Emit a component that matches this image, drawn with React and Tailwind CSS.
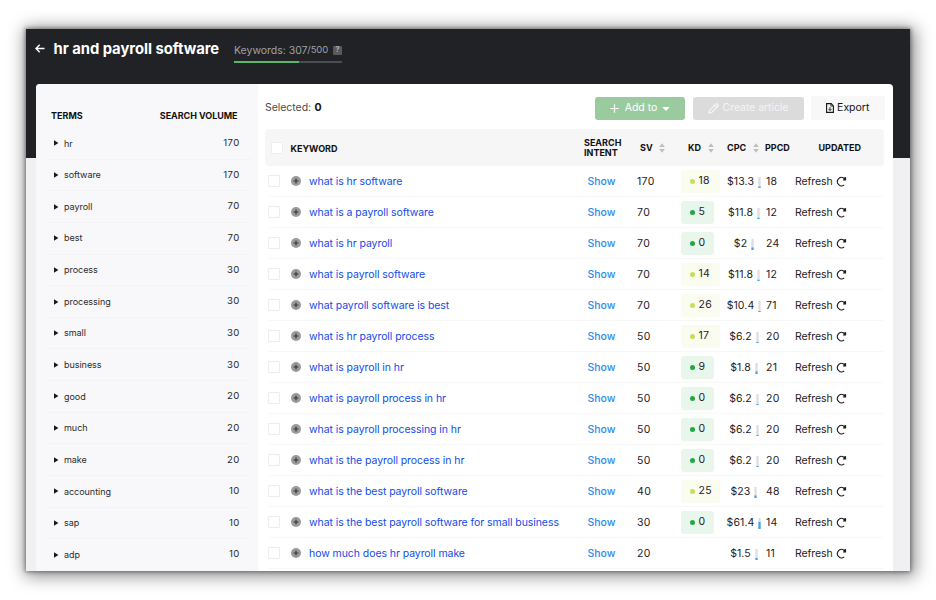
import React from "react";

const terms = [
  ["hr", 170], ["software", 170], ["payroll", 70], ["best", 70], ["process", 30],
  ["processing", 30], ["small", 30], ["business", 30], ["good", 20], ["much", 20],
  ["make", 20], ["accounting", 10], ["sap", 10], ["adp", 10],
];

// keyword, search volume, difficulty, cpc, ppc difficulty, gauge fill in px
const keywords = [
  ["what is hr software", 170, 18, "$13.3", 18, 1.5],
  ["what is a payroll software", 70, 5, "$11.8", 12, 1.2],
  ["what is hr payroll", 70, 0, "$2", 24, 2.5],
  ["what is payroll software", 70, 14, "$11.8", 12, 1.2],
  ["what payroll software is best", 70, 26, "$10.4", 71, 1],
  ["what is hr payroll process", 50, 17, "$6.2", 20, 1],
  ["what is payroll in hr", 50, 9, "$1.8", 21, 2.5],
  ["what is payroll process in hr", 50, 0, "$6.2", 20, 1],
  ["what is payroll processing in hr", 50, 0, "$6.2", 20, 1],
  ["what is the payroll process in hr", 50, 0, "$6.2", 20, 1],
  ["what is the best payroll software", 40, 25, "$23", 48, 2.5],
  ["what is the best payroll software for small business", 30, 0, "$61.4", 14, 7],
  ["how much does hr payroll make", 20, null, "$1.5", 11, 2],
];

function Sort() {
  return (
    <svg width="6" height="10" viewBox="0 0 6 10" fill="#bebebe" className="shrink-0">
      <path d="M3 0.3 5.8 4H0.2Z" />
      <path d="M3 9.7 5.8 6H0.2Z" />
    </svg>
  );
}

function Difficulty({ value }) {
  if (value === null) return null;
  const low = value < 10;
  return (
    <div className={`flex h-[23px] items-center gap-[3.5px] rounded-[3px] pl-[9px] ${low ? "w-[32.5px] bg-[#e8f6ec]" : "w-[38.5px] bg-[#f9fcef]"}`}>
      <span className={`size-[5px] rounded-full ${low ? "bg-[#22a745]" : "bg-[#c3df5c]"}`} />
      <span>{value}</span>
    </div>
  );
}

function Gauge({ fill }) {
  return (
    <svg width="3" height="11" viewBox="0 0 3 11" className="shrink-0">
      <rect x="0.4" width="2.2" height="11" fill="#dcdde0" />
      <rect x="0.4" y={11 - fill} width="2.2" height={fill} fill="#3fa5ee" />
    </svg>
  );
}

function RefreshIcon() {
  return (
    <svg width="11" height="11" viewBox="0 0 11 11" fill="none" className="shrink-0">
      <path d="M8.2 8.9A4.2 4.2 0 1 1 7.6 1.9" stroke="#1c1c1c" strokeWidth="1.1" />
      <path d="M10.1 1.1V4.4H6.8L7.6 3.2 7 1.7Z" fill="#1c1c1c" />
    </svg>
  );
}

function Box() {
  return <span className="size-[12px] shrink-0 rounded-[1px] border border-[#ededee] bg-white" />;
}

export default function App() {
  return (
    <div className="h-[600px] w-[936px] overflow-hidden bg-white pl-[26px] pt-[29px] font-['Inter','Liberation_Sans',sans-serif] text-[#1f2123]">
      <div className="h-[542px] w-[884px] bg-[linear-gradient(#202226_129px,#f0f0f2_129px)] shadow-[0_0_4px_1px_rgba(0,0,0,0.4),2px_2px_16px_3px_rgba(0,0,0,0.45)]">
        <header className="flex h-[55px] pl-[9px]">
          <svg width="10" height="9" viewBox="0 0 10 9" fill="none" stroke="#fff" strokeWidth="1.4" className="mt-[15px]">
            <path d="M9.5 4.5H1M4.7 0.7 0.9 4.5 4.7 8.3" />
          </svg>
          <h1 className="ml-[8.5px] mt-[10px] w-[180.5px] whitespace-nowrap text-[14.8px] font-bold leading-[20px] tracking-[-0.03px] text-white">hr and payroll software</h1>
          <div className="mt-[15px] w-[108px]">
            <div className="flex h-[13px] items-center whitespace-nowrap text-[#a0a1a4]">
              <span className="text-[10.5px] tracking-[-0.02px]">Keywords:</span>
              <span className="ml-[3px] text-[10.5px] tracking-[-0.1px]">307</span>
              <span className="text-[9.5px] tracking-[-0.1px]">/500</span>
              <span className="ml-auto flex h-[9px] w-[9px] items-center justify-center rounded-[1px] bg-[#58595c] text-[7px] font-bold text-[#b5b5b7]">?</span>
            </div>
            <div className="mt-[4px] h-[2px] bg-[#4b4d50]">
              <div className="h-full w-[65px] bg-[#58b86a]" />
            </div>
          </div>
        </header>

        <div className="ml-[10px] flex h-[487px] w-[856.5px] overflow-hidden rounded-t-[4px] bg-white">
          <aside className="w-[222px] shrink-0 bg-[#f8f8fa] pt-[25px]">
            <div className="flex h-[14px] items-center justify-between pl-[15px] pr-[20.5px] text-[9px] font-bold text-[#111]">
              <span>TERMS</span>
              <span className="tracking-[-0.05px]">SEARCH VOLUME</span>
            </div>
            <div className="mt-[5px]">
              {terms.map(([name, volume]) => (
                <div key={name} className="ml-[10px] mr-[6px] flex h-[31.65px] items-center border-b border-[#f4f4f6] pl-[8px] pr-[12.5px] text-[9px] text-[#2a2b2d]">
                  <svg width="4.5" height="6" viewBox="0 0 4 6" preserveAspectRatio="none" fill="#1a1a1a"><path d="M0 0.2 3.9 3 0 5.8Z" /></svg>
                  <span className="ml-[5.5px] tracking-[-0.04px]">{name}</span>
                  <span className="ml-auto text-[9.6px] tracking-[0.3px]">{volume}</span>
                </div>
              ))}
            </div>
          </aside>

          <main className="w-[634.5px] pl-[7px]">
            <div className="flex h-[45px] items-center pt-[3px] text-[10.5px]">
              <span className="tracking-[-0.05px] text-[#4a4b4d]">Selected:</span>
              <b className="ml-[3.5px] font-bold text-[#111]">0</b>
              <div className="ml-auto mr-[8px] flex items-center gap-[7.5px]">
                <button className="flex h-[23px] w-[90px] items-center justify-center rounded-[3px] bg-[#9acb9e] text-white">
                  <svg width="9" height="9" viewBox="0 0 9 9" stroke="#fff" strokeWidth="1.2"><path d="M4.5 0.3V8.7M0.3 4.5H8.7" /></svg>
                  <span className="ml-[6px]">Add to</span>
                  <svg width="8" height="4" viewBox="0 0 8 4" fill="#fff" className="ml-[5px] mt-[1px]"><path d="M0.3 0H7.7L4 4Z" /></svg>
                </button>
                <button className="flex h-[23px] w-[111px] items-center justify-center rounded-[3px] bg-[#dbdbdc] text-[#f4f4f4]">
                  <svg width="11" height="11" viewBox="0 0 11 11" fill="none" stroke="#f7f7f7" strokeWidth="1.1" strokeLinejoin="round">
                    <path d="M0.8 10.2 1.5 7.4 8 0.9Q8.6 0.4 9.2 0.9L10.1 1.8Q10.6 2.4 10.1 3L3.6 9.5ZM6.8 2.2 8.8 4.2" />
                  </svg>
                  <span className="ml-[4px] tracking-[-0.05px]">Create article</span>
                </button>
                <button className="flex h-[24px] w-[73.5px] items-center justify-center rounded-[2px] bg-[#f8f8f8] text-[#151515]">
                  <svg width="8" height="10" viewBox="0 0 8 10" fill="none" stroke="#151515" strokeWidth="1.1">
                    <path d="M0.6 0.6H5.2L7.4 2.9V9.4H0.6Z" />
                    <path d="M4.9 0.8V3.1H7.2" strokeWidth="0.8" />
                    <path d="M4 4V7.4M2.4 5.9 4 7.5 5.6 5.9" strokeWidth="0.9" />
                  </svg>
                  <span className="ml-[3px]">Export</span>
                </button>
              </div>
            </div>

            <div className="flex h-[37px] w-[619px] items-center rounded-[4px] bg-[#f6f6f6] pl-[6px] pt-[1px] text-[9px] font-bold leading-[10.5px] text-[#111]">
              <Box />
              <span className="ml-[7.5px] w-[293.5px] pt-[2px]">KEYWORD</span>
              <span className="w-[56px]">SEARCH<br />INTENT</span>
              <span className="flex w-[48px] items-center gap-[6px]"><span>SV</span><Sort /></span>
              <span className="flex w-[39px] items-center gap-[7px]"><span>KD</span><Sort /></span>
              <span className="flex w-[38px] items-center gap-[6.5px]"><span>CPC</span><Sort /></span>
              <span className="w-[53.5px]">PPCD</span>
              <span>UPDATED</span>
            </div>

            <div>
              {keywords.map(([kw, sv, kd, cpc, ppcd, fill]) => (
                <div key={kw} className="ml-[3px] flex h-[31px] w-[616px] items-center whitespace-nowrap border-b border-[#f8f8f8] text-[10.5px] text-[#1f2123]">
                  <Box />
                  <svg width="10" height="10" viewBox="0 0 10 10" className="ml-[11px] shrink-0">
                    <circle cx="5" cy="5" r="5" fill="#9b9b9b" />
                    <path d="M5 2.6V7.4M2.6 5H7.4" stroke="#333" strokeWidth="1.1" />
                  </svg>
                  <span className="ml-[8px] w-[278.5px] pt-[1px] tracking-[-0.07px] text-[#124be8]">{kw}</span>
                  <span className="w-[49.5px] pt-[1px] font-medium text-[#2b8df0]">Show</span>
                  <span className="w-[44px] pt-[1px] tracking-[0.35px]">{sv}</span>
                  <span className="w-[43px] pt-[0.5px] tracking-[0.35px]"><Difficulty value={kd} /></span>
                  <span className="ml-[0.5px] flex w-[39px] items-center justify-center gap-[4px] pt-[1px] tracking-[0.1px]">
                    <span>{cpc}</span>
                    <span className="mt-[1px] flex"><Gauge fill={fill} /></span>
                  </span>
                  <span className="ml-[2.5px] w-[29px] pt-[1px] tracking-[0.3px]">{ppcd}</span>
                  <span className="pt-[1px] tracking-[-0.08px]">Refresh</span>
                  <span className="ml-[3px]"><RefreshIcon /></span>
                </div>
              ))}
            </div>
          </main>
        </div>
      </div>
    </div>
  );
}
